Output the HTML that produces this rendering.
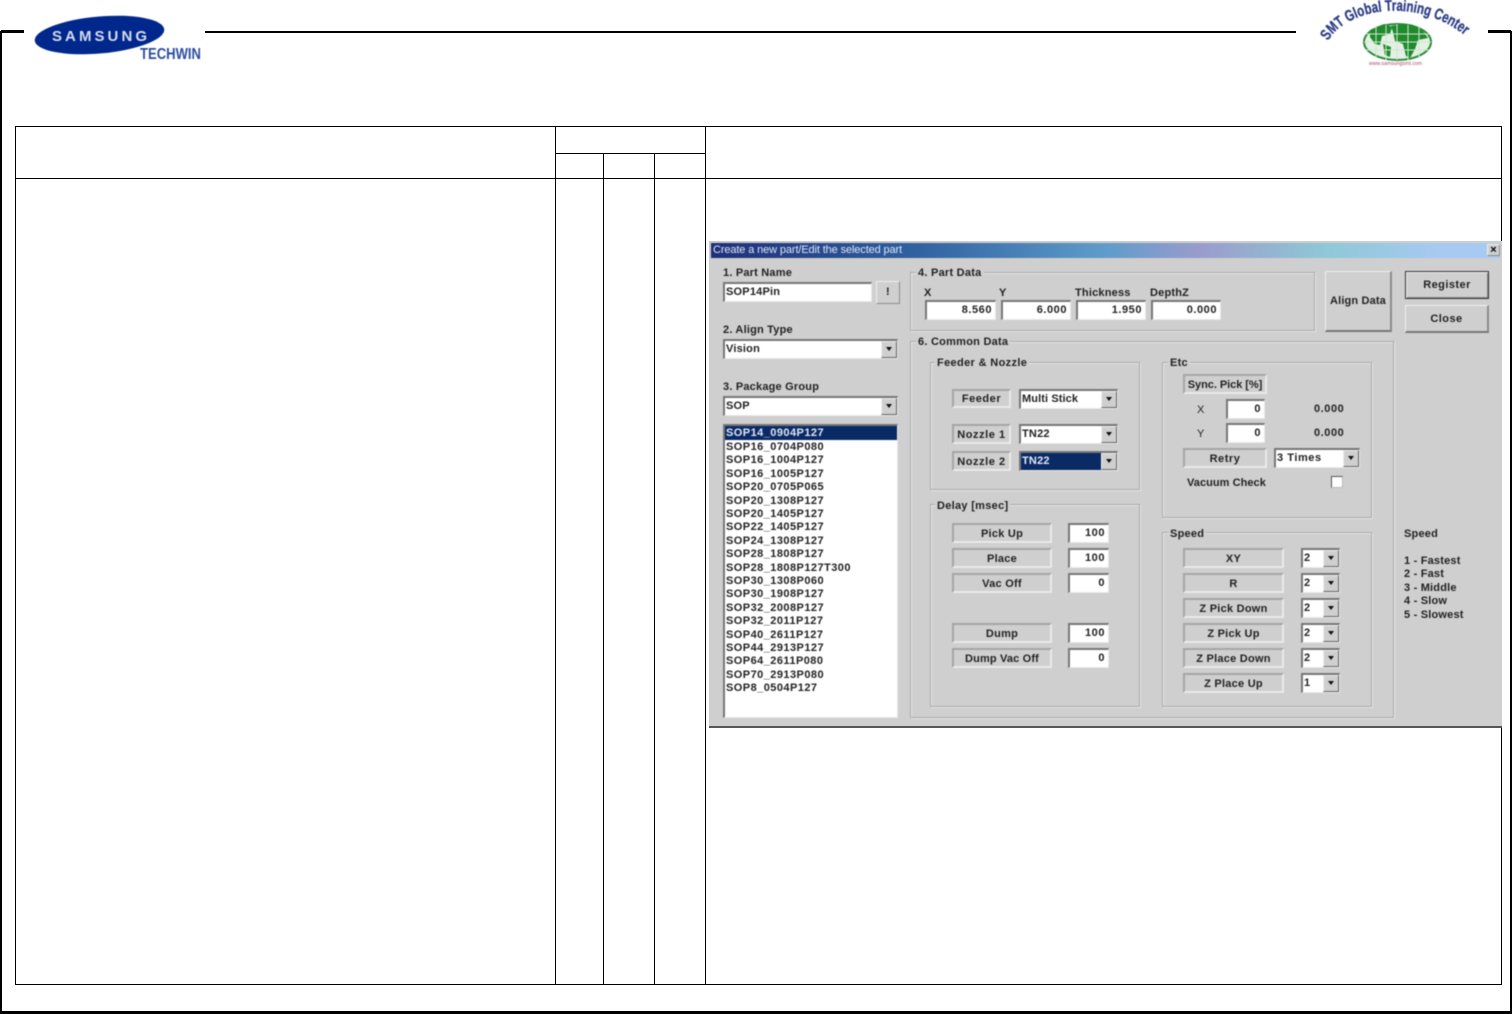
<!DOCTYPE html>
<html><head><meta charset="utf-8"><title>Create a new part</title>
<style>
html,body{margin:0;padding:0;background:#fff;width:1512px;height:1014px;overflow:hidden}
div,span{position:absolute;box-sizing:border-box}
.k{background:#000}
#d{left:709px;top:241px;width:793px;height:487px;background:#cfcfcf;border-bottom:2px solid #555}
#ui{left:0;top:0;width:1512px;height:1014px;filter:blur(.45px);font:bold 11px/14px "Liberation Sans",sans-serif;color:#222;letter-spacing:.2px}
.t{white-space:nowrap;height:14px;margin-top:1px}
.g{border:1px solid #a9a9a9;box-shadow:1px 1px 0 #e6e6e6,inset 1px 1px 0 #e6e6e6}
.l{background:#cfcfcf;padding:0 2px;white-space:nowrap;height:14px;margin-top:-6px;letter-spacing:.25px}
.b{background:#cfcfcf;border:1px solid;border-color:#eee #8c8c8c #8c8c8c #eee;text-align:center;line-height:19px;white-space:nowrap;letter-spacing:.45px}
.f{background:#cfcfcf;border:2px solid;border-color:#a5a5a5 #eaeaea #eaeaea #a5a5a5;text-align:center;line-height:18px;white-space:nowrap;letter-spacing:.25px}
.i{background:#fff;border-style:solid;border-width:2px 1px 1px 2px;border-color:#777 #e8e8e8 #e8e8e8 #777;text-align:right;padding-right:3px;line-height:17px;letter-spacing:.55px}
.c{background:#fff;border-style:solid;border-width:2px 1px 1px 2px;border-color:#777 #e8e8e8 #e8e8e8 #777;padding-left:1px;line-height:17px;white-space:nowrap}
.c u{position:absolute;right:0;top:0;bottom:0;width:14px;background:#cfcfcf;border:1px solid;border-color:#eee #666 #666 #eee;text-decoration:none}
.c u:after{content:"";position:absolute;left:4px;top:5px;border:3px solid transparent;border-top:4px solid #111;border-bottom:0}
.s{left:-1px;height:13.4px;line-height:14px;padding-left:2px;white-space:nowrap;letter-spacing:.45px}
.n{letter-spacing:.55px}
</style></head><body>

<!-- page frame -->
<div class="k" style="left:1px;top:30px;width:23px;height:3px"></div>
<div class="k" style="left:0;top:31px;width:2px;height:983px"></div>
<div class="k" style="left:0;top:1011px;width:1512px;height:3px"></div>
<div class="k" style="left:1510px;top:31px;width:2px;height:983px"></div>
<div class="k" style="left:1488px;top:30px;width:23px;height:3px"></div>
<div class="k" style="left:205px;top:31px;width:1091px;height:2px"></div>

<!-- logos -->
<svg style="position:absolute;left:0;top:0;filter:blur(.6px)" width="1512" height="90">
<ellipse cx="99.5" cy="35" rx="65" ry="18.5" transform="rotate(-5 99.5 35)" fill="#00288c"/>
<text x="52" y="41" font-family="Liberation Sans" font-weight="bold" font-size="15" fill="#d5dcef" textLength="95" lengthAdjust="spacing">SAMSUNG</text>
<text x="140" y="59" font-family="Liberation Sans" font-weight="bold" font-size="16" fill="#2c4c9e" textLength="61" lengthAdjust="spacingAndGlyphs">TECHWIN</text>
<defs><path id="arc" d="M1328 41 C1347 8 1418 -5 1468 38 L1500 64"/></defs>
<text font-family="Liberation Sans" font-weight="bold" font-size="15.5" fill="#2a3c84" stroke="#2a3c84" stroke-width=".3"><textPath href="#arc" textLength="152" lengthAdjust="spacingAndGlyphs">SMT Global Training Center</textPath></text>
<ellipse cx="1397.5" cy="42" rx="33.5" ry="18" fill="#e4f0e4" stroke="#2a8a3a" stroke-width="2"/>
<path d="M1370 30l14-6 8 3-2 7-8 2-2 9-5-1-5-7zM1391 26l15-2 16 6 6 8-10 2-3 9-5 9-4-2-3-12-8-3-2-9zM1383 44l8 3-1 10-5-2z" fill="#1e8a2c"/>
<path d="M1365 34h65M1364 42h67M1366 50h63M1376 26v32M1386 25v35M1397 24v36M1408 25v35M1419 26v32" stroke="#cfe6cf" stroke-width="1" fill="none"/>
<text x="1369" y="65" font-family="Liberation Sans" font-size="5" fill="#a84a6a" textLength="53" lengthAdjust="spacingAndGlyphs">www.samsungsmt.com</text>
</svg>

<!-- table -->
<div class="k" style="left:15px;top:126px;width:1487px;height:1px"></div>
<div class="k" style="left:15px;top:178px;width:1487px;height:1px"></div>
<div class="k" style="left:15px;top:984px;width:1487px;height:1px"></div>
<div class="k" style="left:555px;top:153px;width:150px;height:1px"></div>
<div class="k" style="left:15px;top:126px;width:1px;height:859px"></div>
<div class="k" style="left:555px;top:126px;width:1px;height:859px"></div>
<div class="k" style="left:705px;top:126px;width:1px;height:859px"></div>
<div class="k" style="left:1501px;top:126px;width:1px;height:859px"></div>
<div class="k" style="left:603px;top:153px;width:1px;height:832px"></div>
<div class="k" style="left:654px;top:153px;width:1px;height:832px"></div>

<div id="d"></div>
<div id="ui">
<div style="left:711px;top:243px;width:789px;height:15px;background:linear-gradient(90deg,#1f2f7a 0,#2e5f9e 25%,#5f9ccb 50%,#9a9ccb 62%,#8fc8d8 78%,#a6caf0 92%,#a6caf0 100%)"></div>
<div class="t" style="left:713px;top:242px;color:#dfe6f5;font-weight:normal;letter-spacing:-.12px">Create a new part/Edit the selected part</div>
<div class="b" style="left:1487px;top:244px;width:13px;height:12px;line-height:10px;font-size:11px;color:#000;letter-spacing:0">×</div>

<!-- left column -->
<div class="t" style="left:723px;top:265px">1. Part Name</div>
<div class="c" style="left:723px;top:282px;width:149px;height:20px">SOP14Pin</div>
<div class="b" style="left:876px;top:281px;width:24px;height:23px;line-height:21px">!</div>
<div class="t" style="left:723px;top:322px">2. Align Type</div>
<div class="c" style="left:723px;top:339px;width:175px;height:20px">Vision<u></u></div>
<div class="t" style="left:723px;top:379px">3. Package Group</div>
<div class="c" style="left:723px;top:396px;width:175px;height:20px">SOP<u></u></div>

<div style="left:723px;top:424px;width:175px;height:294px;background:#fff;border-style:solid;border-width:2px 1px 1px 2px;border-color:#777 #e8e8e8 #e8e8e8 #777">
<div class="s" style="top:0;left:0;width:172px;padding-left:1px;background:#0a2a66;color:#dfe6f5;height:14px;line-height:15px">SOP14_0904P127</div>
<div class="s" style="top:14px">SOP16_0704P080</div>
<div class="s" style="top:27.4px">SOP16_1004P127</div>
<div class="s" style="top:40.8px">SOP16_1005P127</div>
<div class="s" style="top:54.2px">SOP20_0705P065</div>
<div class="s" style="top:67.6px">SOP20_1308P127</div>
<div class="s" style="top:81px">SOP20_1405P127</div>
<div class="s" style="top:94.4px">SOP22_1405P127</div>
<div class="s" style="top:107.8px">SOP24_1308P127</div>
<div class="s" style="top:121.2px">SOP28_1808P127</div>
<div class="s" style="top:134.6px">SOP28_1808P127T300</div>
<div class="s" style="top:148px">SOP30_1308P060</div>
<div class="s" style="top:161.4px">SOP30_1908P127</div>
<div class="s" style="top:174.8px">SOP32_2008P127</div>
<div class="s" style="top:188.2px">SOP32_2011P127</div>
<div class="s" style="top:201.6px">SOP40_2611P127</div>
<div class="s" style="top:215px">SOP44_2913P127</div>
<div class="s" style="top:228.4px">SOP64_2611P080</div>
<div class="s" style="top:241.8px">SOP70_2913P080</div>
<div class="s" style="top:255.2px">SOP8_0504P127</div>
</div>

<!-- part data -->
<div class="g" style="left:910px;top:272px;width:405px;height:59px"></div>
<div class="l" style="left:916px;top:272px">4. Part Data</div>
<div class="t" style="left:924px;top:285px">X</div>
<div class="t" style="left:999px;top:285px">Y</div>
<div class="t" style="left:1075px;top:285px">Thickness</div>
<div class="t" style="left:1150px;top:285px">DepthZ</div>
<div class="i" style="left:925px;top:300px;width:71px;height:20px">8.560</div>
<div class="i" style="left:1001px;top:300px;width:70px;height:20px">6.000</div>
<div class="i" style="left:1076px;top:300px;width:70px;height:20px">1.950</div>
<div class="i" style="left:1151px;top:300px;width:70px;height:20px">0.000</div>

<div class="b" style="left:1325px;top:271px;width:67px;height:61px;line-height:59px;border-bottom:2px solid #777;border-right:2px solid #8c8c8c;letter-spacing:.15px">Align Data</div>
<div class="b" style="left:1405px;top:271px;width:84px;height:28px;line-height:26px;border:1px solid #333;box-shadow:inset 1px 1px 0 #eee,inset -1px -1px 0 #888">Register</div>
<div class="b" style="left:1405px;top:305px;width:84px;height:28px;line-height:26px;border-bottom:2px solid #777;border-right:2px solid #8c8c8c">Close</div>

<!-- common data -->
<div class="g" style="left:910px;top:341px;width:484px;height:377px"></div>
<div class="l" style="left:916px;top:341px">6. Common Data</div>

<div class="g" style="left:930px;top:362px;width:210px;height:128px"></div>
<div class="l" style="left:935px;top:362px;letter-spacing:.35px">Feeder &amp; Nozzle</div>
<div class="f n" style="left:952px;top:389px;width:59px;height:19px;line-height:17px">Feeder</div>
<div class="c" style="left:1019px;top:389px;width:99px;height:20px;letter-spacing:.1px">Multi Stick<u></u></div>
<div class="f n" style="left:952px;top:424px;width:59px;height:20px">Nozzle 1</div>
<div class="c" style="left:1019px;top:424px;width:99px;height:20px">TN22<u></u></div>
<div class="f n" style="left:952px;top:451px;width:59px;height:20px">Nozzle 2</div>
<div class="c" style="left:1019px;top:451px;width:99px;height:20px"><span style="left:0;top:0;width:81px;height:17px;background:#0a2a66;color:#e5eaf5;padding-left:1px">TN22</span><u></u></div>

<div class="g" style="left:1162px;top:362px;width:210px;height:156px"></div>
<div class="l" style="left:1168px;top:362px">Etc</div>
<div class="f" style="left:1183px;top:374px;width:84px;height:20px;letter-spacing:-.05px">Sync. Pick [%]</div>
<div class="t" style="left:1197px;top:402px;font-weight:normal">X</div>
<div class="i" style="left:1226px;top:399px;width:39px;height:20px">0</div>
<div class="t n" style="left:1314px;top:401px">0.000</div>
<div class="t" style="left:1197px;top:426px;font-weight:normal">Y</div>
<div class="i" style="left:1226px;top:423px;width:39px;height:20px">0</div>
<div class="t n" style="left:1314px;top:425px">0.000</div>
<div class="f n" style="left:1183px;top:448px;width:84px;height:20px">Retry</div>
<div class="c n" style="left:1274px;top:448px;width:86px;height:20px">3 Times<u></u></div>
<div class="t" style="left:1187px;top:475px;letter-spacing:.05px">Vacuum Check</div>
<div style="left:1331px;top:476px;width:12px;height:12px;background:#fff;border:1px solid #555;border-right-color:#bbb;border-bottom-color:#bbb"></div>

<div class="g" style="left:930px;top:504px;width:210px;height:203px"></div>
<div class="l" style="left:935px;top:505px;letter-spacing:.3px">Delay [msec]</div>
<div class="f" style="left:952px;top:523px;width:100px;height:20px">Pick Up</div>
<div class="i" style="left:1068px;top:523px;width:41px;height:20px">100</div>
<div class="f" style="left:952px;top:548px;width:100px;height:20px">Place</div>
<div class="i" style="left:1068px;top:548px;width:41px;height:20px">100</div>
<div class="f" style="left:952px;top:573px;width:100px;height:20px">Vac Off</div>
<div class="i" style="left:1068px;top:573px;width:41px;height:20px">0</div>
<div class="f" style="left:952px;top:623px;width:100px;height:20px">Dump</div>
<div class="i" style="left:1068px;top:623px;width:41px;height:20px">100</div>
<div class="f" style="left:952px;top:648px;width:100px;height:20px;letter-spacing:.15px">Dump Vac Off</div>
<div class="i" style="left:1068px;top:648px;width:41px;height:20px">0</div>

<div class="g" style="left:1162px;top:532px;width:210px;height:175px"></div>
<div class="l" style="left:1168px;top:533px">Speed</div>
<div class="f" style="left:1183px;top:548px;width:101px;height:20px">XY</div>
<div class="c" style="left:1301px;top:548px;width:39px;height:20px">2<u></u></div>
<div class="f" style="left:1183px;top:573px;width:101px;height:20px">R</div>
<div class="c" style="left:1301px;top:573px;width:39px;height:20px">2<u></u></div>
<div class="f" style="left:1183px;top:598px;width:101px;height:20px">Z Pick Down</div>
<div class="c" style="left:1301px;top:598px;width:39px;height:20px">2<u></u></div>
<div class="f" style="left:1183px;top:623px;width:101px;height:20px">Z Pick Up</div>
<div class="c" style="left:1301px;top:623px;width:39px;height:20px">2<u></u></div>
<div class="f" style="left:1183px;top:648px;width:101px;height:20px">Z Place Down</div>
<div class="c" style="left:1301px;top:648px;width:39px;height:20px">2<u></u></div>
<div class="f" style="left:1183px;top:673px;width:101px;height:20px">Z Place Up</div>
<div class="c" style="left:1301px;top:673px;width:39px;height:20px">1<u></u></div>

<div class="t" style="left:1404px;top:526px">Speed</div>
<div class="t" style="left:1404px;top:553px">1 - Fastest</div>
<div class="t" style="left:1404px;top:566px">2 - Fast</div>
<div class="t" style="left:1404px;top:580px">3 - Middle</div>
<div class="t" style="left:1404px;top:593px">4 - Slow</div>
<div class="t" style="left:1404px;top:607px">5 - Slowest</div>
</div>
</body></html>
